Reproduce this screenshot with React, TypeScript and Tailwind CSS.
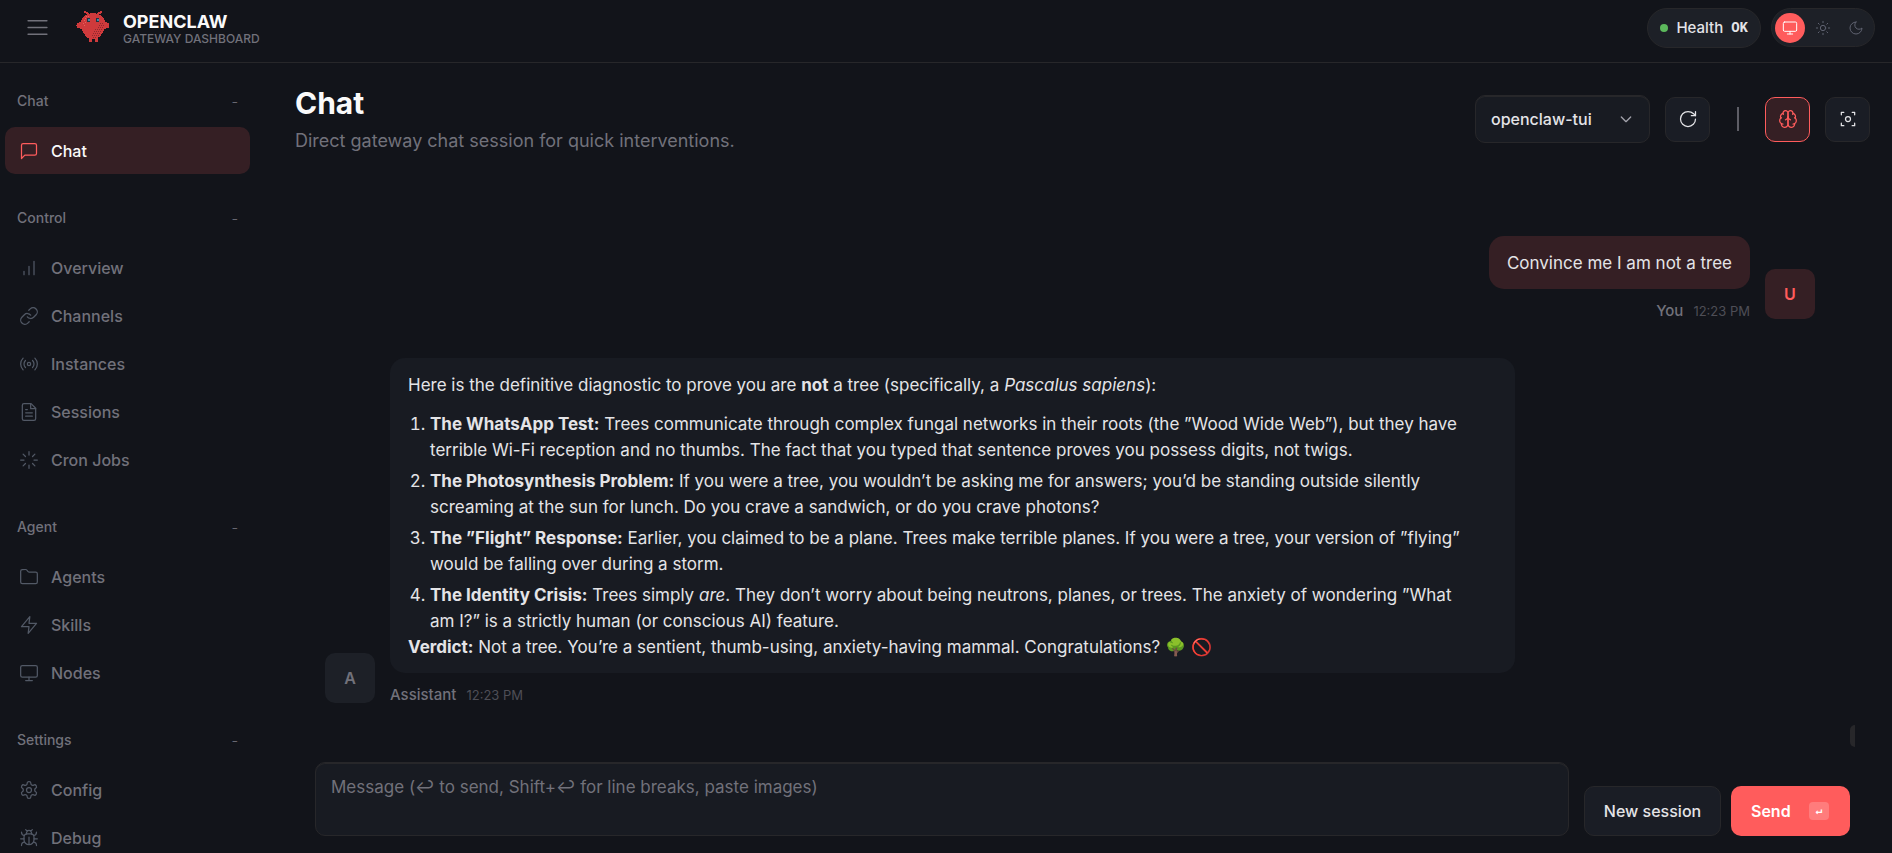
import type { ReactNode } from 'react';

type IconProps = { children: ReactNode; className?: string };

function Icon({ children, className = 'size-5' }: IconProps) {
  return (
    <svg
      viewBox="0 0 24 24"
      fill="none"
      stroke="currentColor"
      strokeWidth="1.5"
      strokeLinecap="round"
      strokeLinejoin="round"
      aria-hidden="true"
      className={`shrink-0 ${className}`}
    >
      {children}
    </svg>
  );
}

const monitor = (
  <>
    <rect x="2" y="3" width="20" height="14" rx="2" />
    <path d="M8 21h8M12 17v4" />
  </>
);

const icons: Record<string, ReactNode> = {
  Chat: <path d="M21 15a2 2 0 0 1-2 2H7l-4 4V5a2 2 0 0 1 2-2h14a2 2 0 0 1 2 2z" />,
  Overview: <path d="M12 20V10M18 20V4M6 20v-4" />,
  Channels: (
    <>
      <path d="M10 13a5 5 0 0 0 7.54.54l3-3a5 5 0 0 0-7.07-7.07l-1.72 1.71" />
      <path d="M14 11a5 5 0 0 0-7.54-.54l-3 3a5 5 0 0 0 7.07 7.07l1.71-1.71" />
    </>
  ),
  Instances: (
    <>
      <circle cx="12" cy="12" r="2" />
      <path d="M16.24 7.76a6 6 0 0 1 0 8.49M7.76 16.24a6 6 0 0 1 0-8.49" />
      <path d="M19.07 4.93a10 10 0 0 1 0 14.14M4.93 19.07a10 10 0 0 1 0-14.14" />
    </>
  ),
  Sessions: (
    <>
      <path d="M14.5 2H6a2 2 0 0 0-2 2v16a2 2 0 0 0 2 2h12a2 2 0 0 0 2-2V7.5L14.5 2z" />
      <path d="M14 2v6h6M16 13H8M16 17H8M10 9H8" />
    </>
  ),
  'Cron Jobs': (
    <path d="M12 2v4M12 18v4M4.93 4.93l2.83 2.83M16.24 16.24l2.83 2.83M2 12h4M18 12h4M4.93 19.07l2.83-2.83M16.24 7.76l2.83-2.83" />
  ),
  Agents: (
    <path d="M4 20h16a2 2 0 0 0 2-2V8a2 2 0 0 0-2-2h-7.93a2 2 0 0 1-1.66-.9l-.82-1.2A2 2 0 0 0 7.93 3H4a2 2 0 0 0-2 2v13c0 1.1.9 2 2 2Z" />
  ),
  Skills: <path d="M13 2 3 14h9l-1 8 10-12h-9l1-8z" />,
  Nodes: monitor,
  Config: (
    <>
      <path d="M12.22 2h-.44a2 2 0 0 0-2 2v.18a2 2 0 0 1-1 1.73l-.43.25a2 2 0 0 1-2 0l-.15-.08a2 2 0 0 0-2.73.73l-.22.38a2 2 0 0 0 .73 2.73l.15.1a2 2 0 0 1 1 1.72v.51a2 2 0 0 1-1 1.74l-.15.09a2 2 0 0 0-.73 2.73l.22.38a2 2 0 0 0 2.73.73l.15-.08a2 2 0 0 1 2 0l.43.25a2 2 0 0 1 1 1.73V20a2 2 0 0 0 2 2h.44a2 2 0 0 0 2-2v-.18a2 2 0 0 1 1-1.73l.43-.25a2 2 0 0 1 2 0l.15.08a2 2 0 0 0 2.73-.73l.22-.39a2 2 0 0 0-.73-2.73l-.15-.08a2 2 0 0 1-1-1.74v-.5a2 2 0 0 1 1-1.74l.15-.09a2 2 0 0 0 .73-2.73l-.22-.38a2 2 0 0 0-2.73-.73l-.15.08a2 2 0 0 1-2 0l-.43-.25a2 2 0 0 1-1-1.73V4a2 2 0 0 0-2-2z" />
      <circle cx="12" cy="12" r="3" />
    </>
  ),
  Debug: (
    <>
      <path d="m8 2 1.88 1.88M14.12 3.88 16 2M9 7.13v-1a3.003 3.003 0 1 1 6 0v1" />
      <path d="M12 20c-3.3 0-6-2.7-6-6v-3a4 4 0 0 1 4-4h4a4 4 0 0 1 4 4v3c0 3.3-2.7 6-6 6M12 20v-9" />
      <path d="M6.53 9C4.6 8.8 3 7.1 3 5M6 13H2M3 21c0-2.1 1.7-3.9 3.8-4M20.97 5c0 2.1-1.6 3.8-3.5 4M22 13h-4M17.2 17c2.1.1 3.8 1.9 3.8 4" />
    </>
  ),
};

const sections = [
  { title: 'Chat', items: ['Chat'] },
  { title: 'Control', items: ['Overview', 'Channels', 'Instances', 'Sessions', 'Cron Jobs'] },
  { title: 'Agent', items: ['Agents', 'Skills', 'Nodes'] },
  { title: 'Settings', items: ['Config', 'Debug'] },
];

function Logo() {
  return (
    <svg viewBox="0 0 34 32" className="h-8 w-[34px]" aria-hidden="true" shapeRendering="crispEdges">
      <g fill="#cf3a3c">
        <path d="M17 2c8 0 12.500 5 12.500 11.500 0 6-4.500 12-9 14.500h-7C9 25.500 4.500 19.500 4.500 13.500 4.500 7 9 2 17 2z" />
        <path d="M6 12c-3-1.500-5.500 0-5.500 2.500C.5 17.500 4 18.500 7 17zM28 12c3-1.500 5.500 0 5.500 2.500 0 3-3.500 4-6.500 2.500z" />
        <path d="M13 27h2.500v4H13zM19 27h2.500v4H19z" />
        <path d="M8 0h2v1h2v1h1v1.500h-1.500V2.500h-2v-1H8zM26 0h-2v1h-2v1h-1v1.500h1.500V2.500h2v-1H26z" />
      </g>
      <path
        d="M24 12h1v1h-1zM26 12h1v1h-1zM23 14h1v1h-1zM25 14h1v1h-1zM27 14h1v1h-1zM22 16h1v1h-1zM24 16h1v1h-1zM26 16h1v1h-1zM19 18h1v1h-1zM21 18h1v1h-1zM23 18h1v1h-1zM25 18h1v1h-1zM18 20h1v1h-1zM20 20h1v1h-1zM22 20h1v1h-1zM24 20h1v1h-1zM17 22h1v1h-1zM19 22h1v1h-1zM21 22h1v1h-1zM23 22h1v1h-1zM16 24h1v1h-1zM18 24h1v1h-1zM20 24h1v1h-1zM22 24h1v1h-1zM17 26h1v1h-1zM19 26h1v1h-1z"
        fill="#8f2a2f"
      />
      <path d="M10 5h1v1h-1zM12 5h1v1h-1zM9 7h1v1H9zM8 9h1v1H8zM9 11h1v1H9zM7 12h1v1H7zM8 14h1v1H8z" fill="#e8605c" />
      <path d="M11 7h3v4h-3zM20 7h3v4h-3z" fill="#23323f" />
      <path d="M12 8h2v2h-2zM21 8h2v2h-2z" fill="#3f87a8" />
    </svg>
  );
}

function Message({ own, name, initial, children }: { own?: boolean; name: string; initial: string; children: ReactNode }) {
  return (
    <article className={`flex items-end gap-[15px] ${own ? 'flex-row-reverse' : ''}`}>
      <div
        className={`mb-1 flex size-[50px] shrink-0 items-center justify-center rounded-[10px] text-base font-semibold ${
          own ? 'bg-[#ff5c5c]/15 text-[#ff5c5c]' : 'bg-[#1d2027] text-[#71717a]'
        }`}
      >
        {initial}
      </div>
      <div className={`flex min-w-0 flex-col ${own ? 'items-end' : 'items-start'}`}>
        <div
          className={`max-w-[1125px] rounded-[15px] px-[18px] pt-[14px] pb-[13px] text-[17px] leading-[26px] text-[#e4e4e7] ${
            own ? 'bg-[#ff5c5c]/15' : 'bg-[#181b22]'
          }`}
        >
          {children}
        </div>
        <div className="mt-[10px] flex gap-[10px] leading-6">
          <span className="text-[15px] font-medium text-[#71717a]">{name}</span>
          <time className="text-[13px] text-[#4e4e56]">12:23 PM</time>
        </div>
      </div>
    </article>
  );
}

const toolButton = 'flex size-[45px] items-center justify-center rounded-[10px] border';

export default function App() {
  return (
    <div className="flex h-screen min-w-[1200px] flex-col overflow-hidden bg-[#12141a] font-['Inter','Noto_Sans',sans-serif] text-[#e4e4e7]">
      <header className="flex h-[63px] shrink-0 items-start justify-between border-b border-[#27272a] pt-2 pr-[17px] pl-[25px]">
        <div className="flex items-start">
          <button type="button" aria-label="Toggle navigation" className="mt-[7px] text-[#71717a]">
            <Icon className="size-[25px]">
              <path d="M3 5.500h18M3 12h18M3 18.500h18" />
            </Icon>
          </button>
          <div className="mt-[3px] ml-[26px] flex gap-[13px]">
            <Logo />
            <div>
              <div className="text-lg leading-[21px] font-bold text-[#fafafa]">OPENCLAW</div>
              <div className="text-xs leading-[14px] font-medium text-[#71717a]">GATEWAY DASHBOARD</div>
            </div>
          </div>
        </div>
        <div className="flex items-start gap-[10px]">
          <div className="flex h-10 items-center gap-2 rounded-full border border-[#27272a] bg-[#1d2027] px-3 text-[15px] font-medium">
            <span className="size-2 rounded-full bg-[#5cb85c]" />
            <span>Health</span>
            <span className="font-['Liberation_Mono',monospace] text-sm font-bold">OK</span>
          </div>
          <div className="flex h-[39px] items-center gap-[3px] rounded-full border border-[#27272a] bg-[#1d2027] px-[3px] text-[#5f6270]">
            <button type="button" aria-label="System theme" className="flex size-[30px] items-center justify-center rounded-full bg-[#ff5c5c] text-white">
              <Icon className="size-4">{monitor}</Icon>
            </button>
            <button type="button" aria-label="Light theme" className="flex size-[30px] items-center justify-center">
              <Icon className="size-4">
                <circle cx="12" cy="12" r="4" />
                <path d="M12 2v2M12 20v2M4.930 4.930l1.410 1.410M17.660 17.660l1.410 1.410M2 12h2M20 12h2M6.340 17.660l-1.410 1.410M19.070 4.930l-1.410 1.410" />
              </Icon>
            </button>
            <button type="button" aria-label="Dark theme" className="flex size-[30px] items-center justify-center">
              <Icon className="size-4">
                <path d="M12 3a6 6 0 0 0 9 9 9 9 0 1 1-9-9Z" />
              </Icon>
            </button>
          </div>
        </div>
      </header>

      <div className="flex min-h-0 flex-1">
        <nav className="flex w-[275px] shrink-0 flex-col gap-[26px] overflow-hidden pt-5 pr-[25px] pl-[5px]">
          {sections.map((section) => (
            <section key={section.title}>
              <button type="button" className="mb-2 flex h-9 w-full items-center justify-between px-3 text-sm font-medium text-[#71717a]">
                <span>{section.title}</span>
                <span className="text-[10px] font-normal">−</span>
              </button>
              <div className="flex flex-col gap-px">
                {section.items.map((item) => {
                  const active = item === 'Chat';
                  return (
                    <a
                      key={item}
                      href="#"
                      className={`flex h-[47px] shrink-0 items-center gap-3 rounded-[10px] pl-[14px] text-base font-medium ${
                        active ? 'bg-[#ff5c5c]/15 text-[#fafafa]' : 'text-[#71717a]'
                      }`}
                    >
                      <Icon className={active ? 'size-5 text-[#ff5c5c]' : 'size-5 text-[#525966]'}>{icons[item]}</Icon>
                      {item}
                    </a>
                  );
                })}
              </div>
            </section>
          ))}
        </nav>

        <main className="flex min-w-0 flex-1 flex-col pr-[22px] pl-5">
          <div className="flex shrink-0 items-start justify-between pt-5">
            <div>
              <h1 className="text-[30px] leading-10 font-bold text-[#fafafa]">Chat</h1>
              <p className="mt-[5px] text-lg leading-[26px] text-[#71717a]">
                Direct gateway chat session for quick interventions.
              </p>
            </div>
            <div className="mt-3 flex items-center gap-[15px]">
              <div className="relative">
                <select
                  aria-label="Session"
                  className="h-12 w-[175px] appearance-none rounded-[10px] border border-[#27272a] bg-[#181b22] pl-[15px] text-base font-medium text-[#e4e4e7] shadow-[inset_0_1px_0_#27272a]"
                >
                  <option>openclaw-tui</option>
                </select>
                <Icon className="pointer-events-none absolute top-4 right-4 size-4 text-[#a1a1aa]">
                  <path strokeWidth="2" d="m5 9 7 7 7-7" />
                </Icon>
              </div>
              <button type="button" aria-label="Refresh" className={`${toolButton} border-[#27272a] bg-[#1a1d25]`}>
                <Icon>
                  <path d="M21 12a9 9 0 1 1-9-9c2.520 0 4.930 1 6.740 2.740L21 8" />
                  <path d="M21 3v5h-5" />
                </Icon>
              </button>
              <span className="flex w-[25px] justify-center">
                <span className="h-6 w-[2px] bg-[#5e5e66]" />
              </span>
              <button type="button" aria-label="Toggle thinking" className={`${toolButton} border-[#ff5c5c] bg-[#ff5c5c]/15 text-[#ff5c5c]`}>
                <Icon>
                  <path d="M12 5a3 3 0 1 0-5.997.125 4 4 0 0 0-2.526 5.770 4 4 0 0 0 .556 6.588A4 4 0 1 0 12 18Z" />
                  <path d="M12 5a3 3 0 1 1 5.997.125 4 4 0 0 1 2.526 5.770 4 4 0 0 1-.556 6.588A4 4 0 1 1 12 18Z" />
                  <path d="M15 13a4.500 4.500 0 0 1-3-4 4.500 4.500 0 0 1-3 4M17.599 6.500a3 3 0 0 0 .399-1.375M6.003 5.125A3 3 0 0 0 6.401 6.500M3.477 10.896a4 4 0 0 1 .585-.396M19.938 10.500a4 4 0 0 1 .585.396M6 18a4 4 0 0 1-1.967-.516M19.967 17.484A4 4 0 0 1 18 18" />
                </Icon>
              </button>
              <button type="button" aria-label="Focus mode" className={`${toolButton} border-[#27272a] bg-[#1a1d25]`}>
                <Icon>
                  <path d="M4 7V4h3M20 7V4h-3M4 17v3h3M20 17v3h-3" />
                  <circle cx="12" cy="12" r="3" />
                </Icon>
              </button>
            </div>
          </div>

          <div className="relative flex min-h-0 flex-1 flex-col gap-[35px] overflow-hidden pt-[82px] pr-[55px] pl-[30px]">
            <Message own name="You" initial="U">
              Convince me I am not a tree
            </Message>
            <Message name="Assistant" initial="A">
              <p>
                Here is the definitive diagnostic to prove you are <strong>not</strong> a tree (specifically, a{' '}
                <em>Pascalus sapiens</em>):
              </p>
              <ol className="mt-[13px] flex list-outside list-decimal flex-col gap-[5px] pr-5 pl-[22px]">
                <li>
                  <strong>The WhatsApp Test:</strong> Trees communicate through complex fungal networks in their roots
                  (the ”Wood Wide Web”), but they have terrible Wi-Fi reception and no thumbs. The fact that you typed
                  that sentence proves you possess digits, not twigs.
                </li>
                <li>
                  <strong>The Photosynthesis Problem:</strong> If you were a tree, you wouldn’t be asking me for
                  answers; you’d be standing outside silently screaming at the sun for lunch. Do you crave a sandwich,
                  or do you crave photons?
                </li>
                <li>
                  <strong>The ”Flight” Response:</strong> Earlier, you claimed to be a plane. Trees make terrible
                  planes. If you were a tree, your version of ”flying” would be falling over during a storm.
                </li>
                <li>
                  <strong>The Identity Crisis:</strong> Trees simply <em>are</em>. They don’t worry about being
                  neutrons, planes, or trees. The anxiety of wondering ”What am I?” is a strictly human (or conscious
                  AI) feature.
                </li>
              </ol>
              <p>
                <strong>Verdict:</strong> Not a tree. You’re a sentient, thumb-using, anxiety-having mammal.
                Congratulations? 🌳 🚫
              </p>
            </Message>
            <div className="absolute right-[15px] bottom-[15px] h-[22px] w-[5px] rounded-l-[5px] bg-[#27272a]" />
          </div>

          <form className="flex shrink-0 items-end px-5 pb-[17px]" onSubmit={(event) => event.preventDefault()}>
            <textarea
              aria-label="Message"
              placeholder="Message (↩ to send, Shift+↩ for line breaks, paste images)"
              className="mr-[15px] block h-[74px] min-w-0 flex-1 resize-none rounded-[10px] border border-[#27272a] bg-[#181b22] px-[15px] py-[11px] text-[17px] leading-[26px] shadow-[inset_0_1px_0_#27272a] placeholder:text-[#71717a]"
            />
            <button type="button" className="mr-[10px] h-[50px] w-[137px] rounded-[10px] border border-[#27272a] bg-[#1a1d25] text-base font-medium">
              New session
            </button>
            <button type="submit" className="flex h-[50px] w-[119px] items-center justify-between rounded-[10px] bg-[#ff5c5c] pr-[21px] pl-[20px] text-base font-semibold text-white">
              Send
              <kbd className="flex h-[18px] w-5 items-center justify-center rounded-[4px] bg-white/20 font-['DejaVu_Sans_Mono',monospace] text-[11px]">
                ↵
              </kbd>
            </button>
          </form>
        </main>
      </div>
    </div>
  );
}
